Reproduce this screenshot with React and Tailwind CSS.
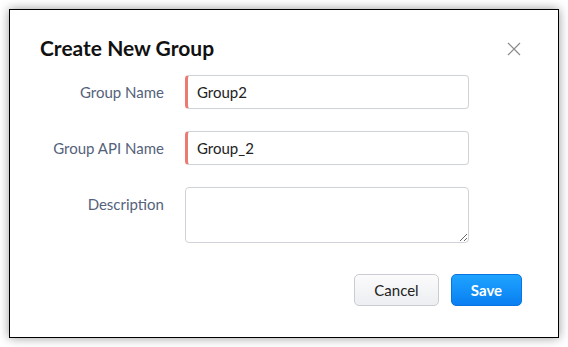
import React from "react";

function Field({ label, value, tall }) {
  return (
    <div className="flex items-start">
      <label className="w-[124px] shrink-0 text-right text-[15px] text-[#54627b] leading-[34px]">
        {label}
      </label>
      <div className="ml-[21px] w-[284px]">
        {tall ? (
          <textarea
            className="block w-full h-[56px] rounded-[4px] border border-[#cfd2d8] bg-white px-[10px] py-[6px] text-[15px] text-[#222] outline-none resize-y"
            defaultValue={value}
          />
        ) : (
          <input
            className="block w-full h-[34px] rounded-[4px] border border-[#cfd2d8] border-l-[3px] border-l-[#ec7a72] bg-white pl-[9px] pr-[10px] text-[15px] text-[#222] outline-none"
            defaultValue={value}
          />
        )}
      </div>
    </div>
  );
}

export default function App() {
  return (
    <div
      className="w-[568px] h-[347px] bg-white p-[9px]"
      style={{ fontFamily: "Lato, 'Open Sans', sans-serif" }}
    >
      <div className="relative h-full w-full border border-black bg-white shadow-[0_0_10px_rgba(0,0,0,0.4)] px-[30px] pt-[24px]">
        <div className="flex items-center justify-between">
          <h2 className="text-[21px] font-bold text-[#111] leading-[28px]">Create New Group</h2>
          <button className="mr-[7px] mt-[2px] text-[#8a8a8a]" aria-label="Close">
            <svg width="14" height="14" viewBox="0 0 14 14" fill="none" stroke="currentColor" strokeWidth="1.2">
              <path d="M1 1L13 13M13 1L1 13" />
            </svg>
          </button>
        </div>

        <div className="mt-[13px] flex flex-col gap-[22px]">
          <Field label="Group Name" value="Group2" />
          <Field label="Group API Name" value="Group_2" />
          <Field label="Description" value="" tall />
        </div>

        <div className="mt-[31px] flex justify-end gap-[12px] pr-[6px]">
          <button className="h-[32px] w-[85px] rounded-[5px] border border-[#c9ccd2] bg-gradient-to-b from-[#fbfbfc] to-[#eceef1] text-[15px] text-[#222]">
            Cancel
          </button>
          <button className="h-[32px] w-[71px] rounded-[5px] border border-[#0a74e0] bg-gradient-to-b from-[#1fa3ff] to-[#0a7ff2] text-[15px] font-bold text-white">
            Save
          </button>
        </div>
      </div>
    </div>
  );
}
